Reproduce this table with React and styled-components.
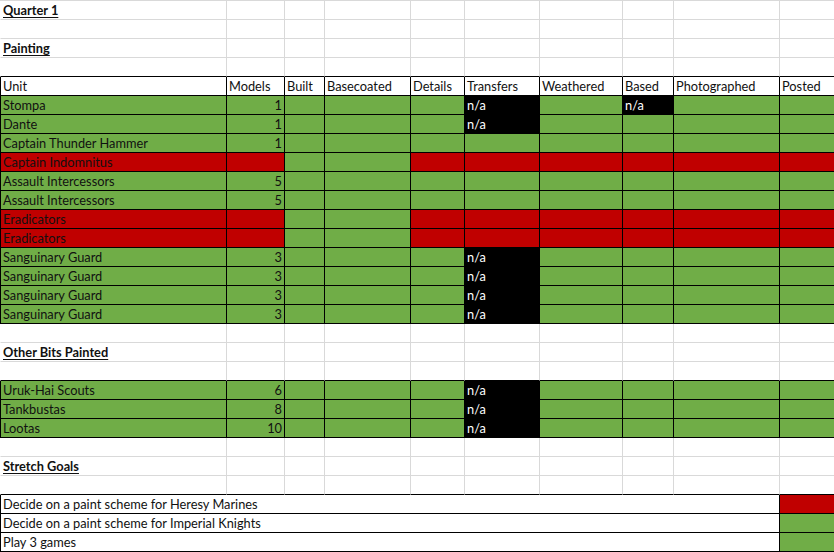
import React from 'react';
import styled, { createGlobalStyle } from 'styled-components';

const GlobalStyle = createGlobalStyle`
  html, body {
    margin: 0;
    padding: 0;
    background: #fff;
    overflow: hidden;
  }
`;

const COLUMNS = [227, 58, 40, 86, 54, 75, 83, 51, 106, 60];
const HEADERS = ['Unit', 'Models', 'Built', 'Basecoated', 'Details', 'Transfers', 'Weathered', 'Based', 'Photographed', 'Posted'];
const FILL = { g: '#70ad47', r: '#c00000', k: '#000000' };

const G = 'g';
const R = 'r';
const K = 'k';
const allGreen = [G, G, G, G, G, G, G, G, G, G];
const noTransfers = [G, G, G, G, G, K, G, G, G, G];
const blocked = [R, R, G, G, R, R, R, R, R, R];

const rows = [
  { type: 'title', text: 'Quarter 1' },
  { type: 'blank' },
  { type: 'title', text: 'Painting' },
  { type: 'blank' },
  { type: 'header' },
  { type: 'unit', name: 'Stompa', models: 1, fills: [G, G, G, G, G, K, G, K, G, G] },
  { type: 'unit', name: 'Dante', models: 1, fills: noTransfers },
  { type: 'unit', name: 'Captain Thunder Hammer', models: 1, fills: allGreen },
  { type: 'unit', name: 'Captain Indomnitus', fills: blocked },
  { type: 'unit', name: 'Assault Intercessors', models: 5, fills: allGreen },
  { type: 'unit', name: 'Assault Intercessors', models: 5, fills: allGreen },
  { type: 'unit', name: 'Eradicators', fills: blocked },
  { type: 'unit', name: 'Eradicators', fills: blocked },
  { type: 'unit', name: 'Sanguinary Guard', models: 3, fills: noTransfers },
  { type: 'unit', name: 'Sanguinary Guard', models: 3, fills: noTransfers },
  { type: 'unit', name: 'Sanguinary Guard', models: 3, fills: noTransfers },
  { type: 'unit', name: 'Sanguinary Guard', models: 3, fills: noTransfers },
  { type: 'blank' },
  { type: 'title', text: 'Other Bits Painted' },
  { type: 'blank' },
  { type: 'unit', name: 'Uruk-Hai Scouts', models: 6, fills: noTransfers },
  { type: 'unit', name: 'Tankbustas', models: 8, fills: noTransfers },
  { type: 'unit', name: 'Lootas', models: 10, fills: noTransfers },
  { type: 'blank' },
  { type: 'title', text: 'Stretch Goals' },
  { type: 'blank' },
  { type: 'goal', text: 'Decide on a paint scheme for Heresy Marines', fill: R },
  { type: 'goal', text: 'Decide on a paint scheme for Imperial Knights', fill: G },
  { type: 'goal', text: 'Play 3 games', fill: G },
];

const boxed = (row) => row && (row.type === 'header' || row.type === 'unit' || row.type === 'goal');

const Sheet = styled.div`
  display: grid;
  grid-template-columns: ${COLUMNS.map((w) => `${w}px`).join(' ')};
  grid-auto-rows: 19px;
  width: ${COLUMNS.reduce((a, b) => a + b, 0)}px;
  border-top: 1px solid #d9d9d9;
  font-family: Lato, 'Liberation Sans', sans-serif;
  font-size: 12.8px;
  color: #000;
`;

const Cell = styled.div`
  box-sizing: border-box;
  height: 19px;
  grid-column: ${(p) => (p.$span ? `span ${p.$span}` : 'auto')};
  border-right: 1px solid ${(p) => (p.$dark ? '#000' : '#d9d9d9')};
  border-bottom: 1px solid ${(p) => (p.$darkBottom ? '#000' : '#d9d9d9')};
  border-left: ${(p) => (p.$first ? `1px solid ${p.$dark ? '#000' : '#fff'}` : 'none')};
  background: ${(p) => FILL[p.$fill] || '#fff'};
  color: ${(p) => (p.$fill === K ? '#fff' : '#111')};
  text-align: ${(p) => (p.$right ? 'right' : 'left')};
  padding: 1px 2px 0 2px;
  line-height: 17px;
  white-space: nowrap;
  overflow: hidden;
`;

const Title = styled.span`
  font-weight: 700;
  text-decoration: underline;
  text-underline-offset: 2px;
`;

function Row({ row, next }) {
  const dark = boxed(row);
  const darkBottom = dark || boxed(next);
  const common = { $dark: dark, $darkBottom: darkBottom };

  if (row.type === 'goal') {
    return (
      <>
        <Cell {...common} $first $span={9}>{row.text}</Cell>
        <Cell {...common} $fill={row.fill} />
      </>
    );
  }

  return COLUMNS.map((_, i) => {
    let content = null;
    let fill;
    let right = false;
    if (row.type === 'title' && i === 0) content = <Title>{row.text}</Title>;
    if (row.type === 'header') content = HEADERS[i];
    if (row.type === 'unit') {
      fill = row.fills[i];
      if (i === 0) content = row.name;
      if (i === 1) {
        content = row.models;
        right = true;
      }
      if (fill === K) content = 'n/a';
    }
    return (
      <Cell key={i} {...common} $first={i === 0} $fill={fill} $right={right}>
        {content}
      </Cell>
    );
  });
}

export default function App() {
  return (
    <>
      <GlobalStyle />
      <Sheet>
        {rows.map((row, i) => (
          <Row key={i} row={row} next={rows[i + 1]} />
        ))}
      </Sheet>
    </>
  );
}
